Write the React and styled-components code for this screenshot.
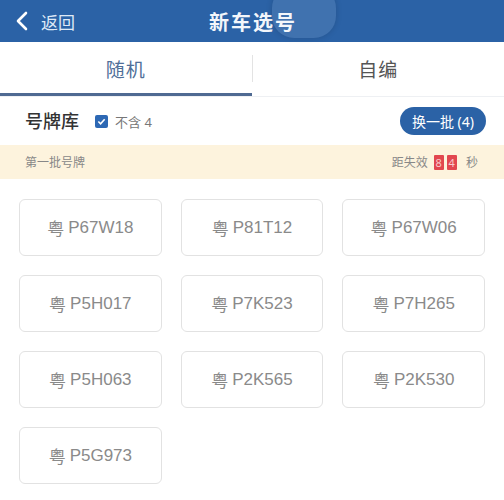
import styled, { createGlobalStyle } from "styled-components";

const GlobalStyle = createGlobalStyle`
  html, body {
    margin: 0;
    padding: 0;
    background: #fff;
    font-family: "Noto Sans", "Noto Sans CJK SC", sans-serif;
  }
`;

const Page = styled.div`
  width: 504px;
  height: 500px;
  overflow: hidden;
  background: #fff;
`;

const Header = styled.div`
  height: 42px;
  background: #2b62a6;
  display: flex;
  align-items: center;
  position: relative;
  color: #fff;
`;

const Back = styled.div`
  display: flex;
  align-items: center;
  gap: 13px;
  padding-left: 15px;
  font-size: 17px;
  color: #dfe9f6;
`;

const Title = styled.div`
  position: absolute;
  left: 0;
  right: 0;
  text-align: center;
  font-size: 20px;
  font-weight: 700;
  color: #f3f6fb;
  pointer-events: none;
  letter-spacing: 2px;
  padding-left: 2px;
`;

const Touch = styled.div`
  position: absolute;
  left: 272px;
  top: -14px;
  width: 64px;
  height: 52px;
  border-radius: 22px;
  background: rgba(255, 255, 255, 0.1);
  box-shadow: 0 0 6px rgba(0, 0, 0, 0.15);
`;

const Tabs = styled.div`
  height: 54px;
  display: flex;
  align-items: stretch;
  background: #fff;
  border-bottom: 1px solid #eef0f3;
`;

const Tab = styled.div`
  flex: 1;
  display: flex;
  align-items: center;
  justify-content: center;
  font-size: 19px;
  letter-spacing: 1px;
  color: ${(p) => (p.$active ? "#4f6f99" : "#555")};
  border-bottom: 3px solid ${(p) => (p.$active ? "#4f6a92" : "transparent")};
  padding-top: 2px;
`;

const TabDivider = styled.div`
  width: 1px;
  background: #e3e3e3;
  margin: 13px 0 14px;
`;

const Toolbar = styled.div`
  height: 48px;
  display: flex;
  align-items: center;
  padding: 0 18px 0 25px;
`;

const Label = styled.div`
  font-size: 18px;
  font-weight: 500;
  color: #333;
  margin-right: 16px;
  margin-bottom: 2px;
`;

const Check = styled.span`
  width: 13px;
  height: 13px;
  border-radius: 2px;
  background: #2d68b4;
  display: inline-flex;
  align-items: center;
  justify-content: center;
  margin-right: 7px;
`;

const CheckText = styled.span`
  font-size: 13px;
  color: #777;
`;

const Swap = styled.button`
  margin-left: auto;
  height: 28px;
  padding: 0 12px;
  border: none;
  border-radius: 14px;
  background: #2b62a6;
  color: #fff;
  font-family: inherit;
  font-size: 14px;
`;

const Band = styled.div`
  height: 34px;
  background: #fdf3dd;
  display: flex;
  align-items: center;
  justify-content: space-between;
  padding: 0 26px 0 25px;
  font-size: 12px;
  color: #888;
`;

const Timer = styled.div`
  display: flex;
  align-items: center;
  gap: 3px;
`;

const Digit = styled.span`
  display: inline-block;
  width: 10px;
  height: 15px;
  line-height: 15px;
  text-align: center;
  background: #e2474f;
  color: #f7c9cc;
  font-size: 11px;
  border-radius: 1px;
`;

const Grid = styled.div`
  display: grid;
  grid-template-columns: repeat(3, 1fr);
  gap: 19px;
  padding: 20px 19px 0;
`;

const Plate = styled.div`
  height: 55px;
  border: 1px solid #e2e2e2;
  border-radius: 6px;
  display: flex;
  align-items: center;
  justify-content: center;
  gap: 4px;
  font-family: "Liberation Sans", "Noto Sans CJK SC", sans-serif;
  font-size: 17px;
  color: #8a8a8a;
`;

const plates = [
  "P67W18", "P81T12", "P67W06",
  "P5H017", "P7K523", "P7H265",
  "P5H063", "P2K565", "P2K530",
  "P5G973",
];

export default function App() {
  return (
    <Page>
      <GlobalStyle />
      <Header>
        <Back>
          <svg width="13" height="20" viewBox="0 0 13 20">
            <path d="M11 2 L3 10 L11 18" fill="none" stroke="#fff" strokeWidth="2.6" strokeLinecap="round" strokeLinejoin="round" />
          </svg>
          返回
        </Back>
        <Title>新车选号</Title>
        <Touch />
      </Header>
      <Tabs>
        <Tab $active>随机</Tab>
        <TabDivider />
        <Tab>自编</Tab>
      </Tabs>
      <Toolbar>
        <Label>号牌库</Label>
        <Check>
          <svg width="9" height="9" viewBox="0 0 10 10">
            <path d="M1.5 5 L4 7.5 L8.5 2.5" fill="none" stroke="#fff" strokeWidth="1.8" />
          </svg>
        </Check>
        <CheckText>不含 4</CheckText>
        <Swap>换一批 (4)</Swap>
      </Toolbar>
      <Band>
        <span>第一批号牌</span>
        <Timer>
          距失效&nbsp;<Digit>8</Digit><Digit>4</Digit>&nbsp;&nbsp;秒
        </Timer>
      </Band>
      <Grid>
        {plates.map((p) => (
          <Plate key={p}>
            <span>粤</span>
            <span>{p}</span>
          </Plate>
        ))}
      </Grid>
    </Page>
  );
}
